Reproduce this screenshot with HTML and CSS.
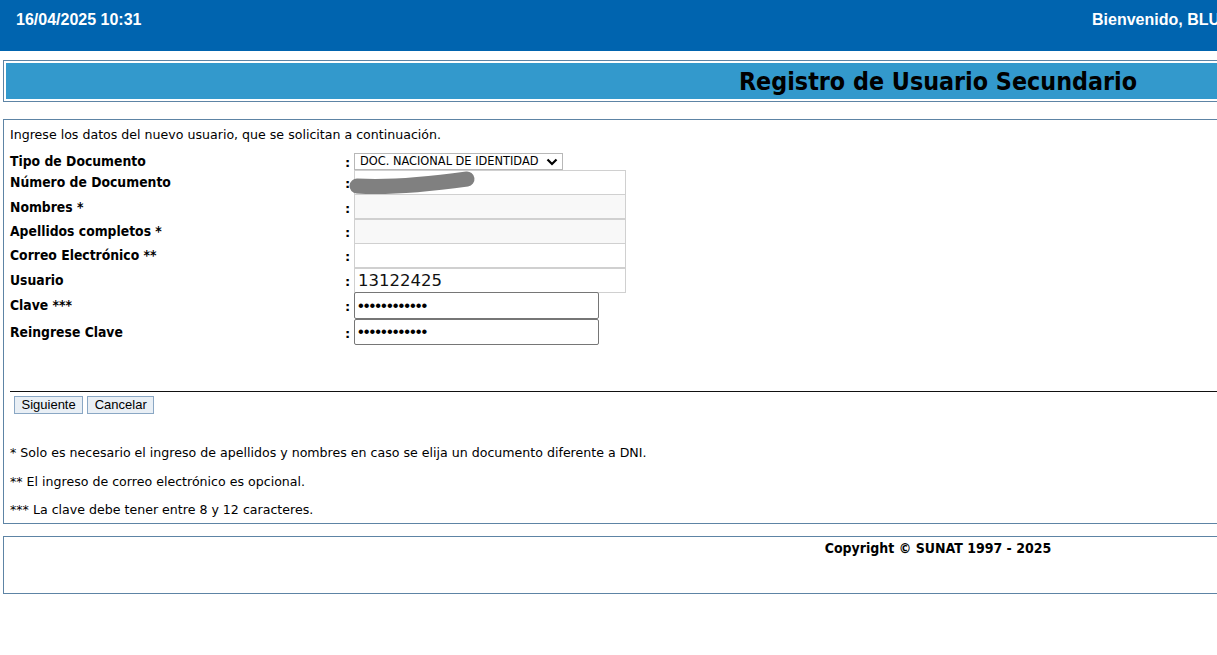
FILE: index.html
```html
<!DOCTYPE html>
<html lang="es">
<head>
<meta charset="utf-8">
<title>Registro de Usuario Secundario</title>
<link rel="stylesheet" href="styles.css">
</head>
<body>
<div class="page">
  <header class="topbar">
    <span class="date">16/04/2025 10:31</span>
    <span class="welcome">Bienvenido, BLU</span>
  </header>

  <div class="titlebox">
    <div class="titleinner">
      <h1>Registro de Usuario Secundario</h1>
    </div>
  </div>

  <form class="formbox">
    <p class="intro">Ingrese los datos del nuevo usuario, que se solicitan a continuación.</p>
    <div class="fields">
      <label class="lbl">Tipo de Documento</label>
      <span class="colon">:</span>
      <div class="selwrap">
        <select class="sel"><option>DOC. NACIONAL DE IDENTIDAD</option></select>
        <svg class="chev" width="12" height="8" viewBox="0 0 12 8"><path d="M1.5 1.5 L6 6 L10.5 1.5" fill="none" stroke="#000" stroke-width="2.2"/></svg>
      </div>

      <label class="lbl">Número de Documento</label>
      <span class="colon">:</span>
      <div class="inwrap">
        <input class="txt" type="text" value="">
        <svg class="scribble" width="140" height="30" viewBox="0 0 140 30"><path d="M11 16 C 45 18, 85 14, 121 9" fill="none" stroke="#808080" stroke-width="15" stroke-linecap="round"/></svg>
      </div>

      <label class="lbl">Nombres *</label>
      <span class="colon">:</span>
      <input class="txt ro" type="text" readonly>

      <label class="lbl">Apellidos completos *</label>
      <span class="colon">:</span>
      <input class="txt ro" type="text" readonly>

      <label class="lbl">Correo Electrónico **</label>
      <span class="colon">:</span>
      <input class="txt" type="text">

      <label class="lbl">Usuario</label>
      <span class="colon">:</span>
      <input class="txt big" type="text" value="13122425">

      <label class="lbl">Clave ***</label>
      <span class="colon">:</span>
      <input class="pwd" type="password" value="abcdefghijkl">

      <label class="lbl">Reingrese Clave</label>
      <span class="colon">:</span>
      <input class="pwd" type="password" value="abcdefghijkl">
    </div>

    <hr class="rule">

    <div class="buttons">
      <button type="button" class="btn">Siguiente</button>
      <button type="button" class="btn">Cancelar</button>
    </div>

    <p class="note">* Solo es necesario el ingreso de apellidos y nombres en caso se elija un documento diferente a DNI.</p>
    <p class="note">** El ingreso de correo electrónico es opcional.</p>
    <p class="note">*** La clave debe tener entre 8 y 12 caracteres.</p>
  </form>

  <footer class="footerbox">
    <p>Copyright © SUNAT 1997 - 2025</p>
  </footer>
</div>
</body>
</html>
```

FILE: styles.css
```css
html, body {
  margin: 0;
  padding: 0;
  background: #ffffff;
  overflow: hidden;
}

body {
  font-family: "DejaVu Sans", sans-serif;
  color: #000;
}

.page {
  width: 1876px;
}

.topbar {
  height: 51px;
  background: #0064af;
  color: #fff;
  font-family: "Liberation Sans", Arial, sans-serif;
  font-weight: bold;
  font-size: 16px;
  display: grid;
  grid-template-columns: 1076px auto;
  align-items: start;
  padding: 11px 0 0 16px;
  box-sizing: border-box;
}

.titlebox {
  margin: 9px 3px 0;
  border: 1px solid #5d84a5;
  padding: 2px;
}

.titleinner {
  height: 36px;
  background: #3399cc;
  display: flex;
  align-items: center;
  justify-content: center;
}

.titleinner h1 {
  margin: 0;
  font-family: "DejaVu Sans Condensed", "DejaVu Sans", sans-serif;
  font-size: 24.8px;
  font-weight: bold;
  line-height: 28px;
  padding-top: 2px;
}

.formbox {
  margin: 17px 3px 0;
  border: 1px solid #5d84a5;
  padding: 7px 6px 6px;
  font-size: 12.6px;
}

.intro {
  margin: 0 0 10px;
  line-height: 15px;
}

.fields {
  display: grid;
  grid-template-columns: 335px 9px auto;
  align-items: center;
  justify-items: start;
}

.lbl {
  font-family: "DejaVu Sans Condensed", "DejaVu Sans", sans-serif;
  font-weight: bold;
  font-size: 13.8px;
}

.colon {
  font-weight: bold;
  font-size: 13px;
  padding-top: 3px;
}

.selwrap {
  position: relative;
  width: 209px;
  height: 17px;
}

.sel {
  appearance: none;
  -webkit-appearance: none;
  width: 209px;
  height: 17px;
  box-sizing: border-box;
  border: 1px solid #b8b8b8;
  background: #fff;
  font-family: "DejaVu Sans", sans-serif;
  font-size: 11.4px;
  padding: 0 0 0 5px;
  line-height: 15px;
  color: #000;
  border-radius: 0;
}

.chev {
  position: absolute;
  right: 5px;
  top: 5px;
  pointer-events: none;
}

.inwrap {
  position: relative;
}

.scribble {
  position: absolute;
  left: -8px;
  top: 0;
}

.txt {
  width: 272px;
  height: 25px;
  box-sizing: border-box;
  border: 1px solid #d0d0d0;
  background: #fff;
  margin: 0 0 -0.6px;
  padding: 0 3px;
  font-family: "DejaVu Sans", sans-serif;
  font-size: 12px;
  display: block;
}

.ro {
  background: #f8f8f8;
}

.big {
  font-size: 16.5px;
  color: #111;
}

.pwd {
  width: 245px;
  height: 26.5px;
  box-sizing: border-box;
  border: 1px solid #767676;
  border-radius: 2px;
  margin: 0;
  padding: 0 3px;
  font-family: "Liberation Sans", Arial, sans-serif;
  font-size: 16.5px;
  display: block;
}

.rule {
  margin: 46px 0 0;
  border: 0;
  border-top: 1px solid #111;
  height: 0;
}

.buttons {
  display: flex;
  gap: 4px;
  margin: 4px 0 0 4px;
}

.btn {
  font-family: "Liberation Sans", Arial, sans-serif;
  font-size: 13px;
  height: 18px;
  padding: 0 6.5px;
  background: #e9eff5;
  border: 1px solid #8aa7c4;
  border-radius: 0;
  color: #000;
  line-height: 16px;
}

.note {
  margin: 0;
  line-height: 15px;
  margin-top: 13.5px;
}

.buttons + .note {
  margin-top: 31px;
}

.footerbox {
  margin: 12px 3px 0;
  border: 1px solid #5d84a5;
  height: 53px;
  padding-top: 3px;
}

.footerbox p {
  margin: 0;
  text-align: center;
  font-family: "DejaVu Sans Condensed", "DejaVu Sans", sans-serif;
  font-weight: bold;
  font-size: 14px;
  line-height: 16px;
}
```
